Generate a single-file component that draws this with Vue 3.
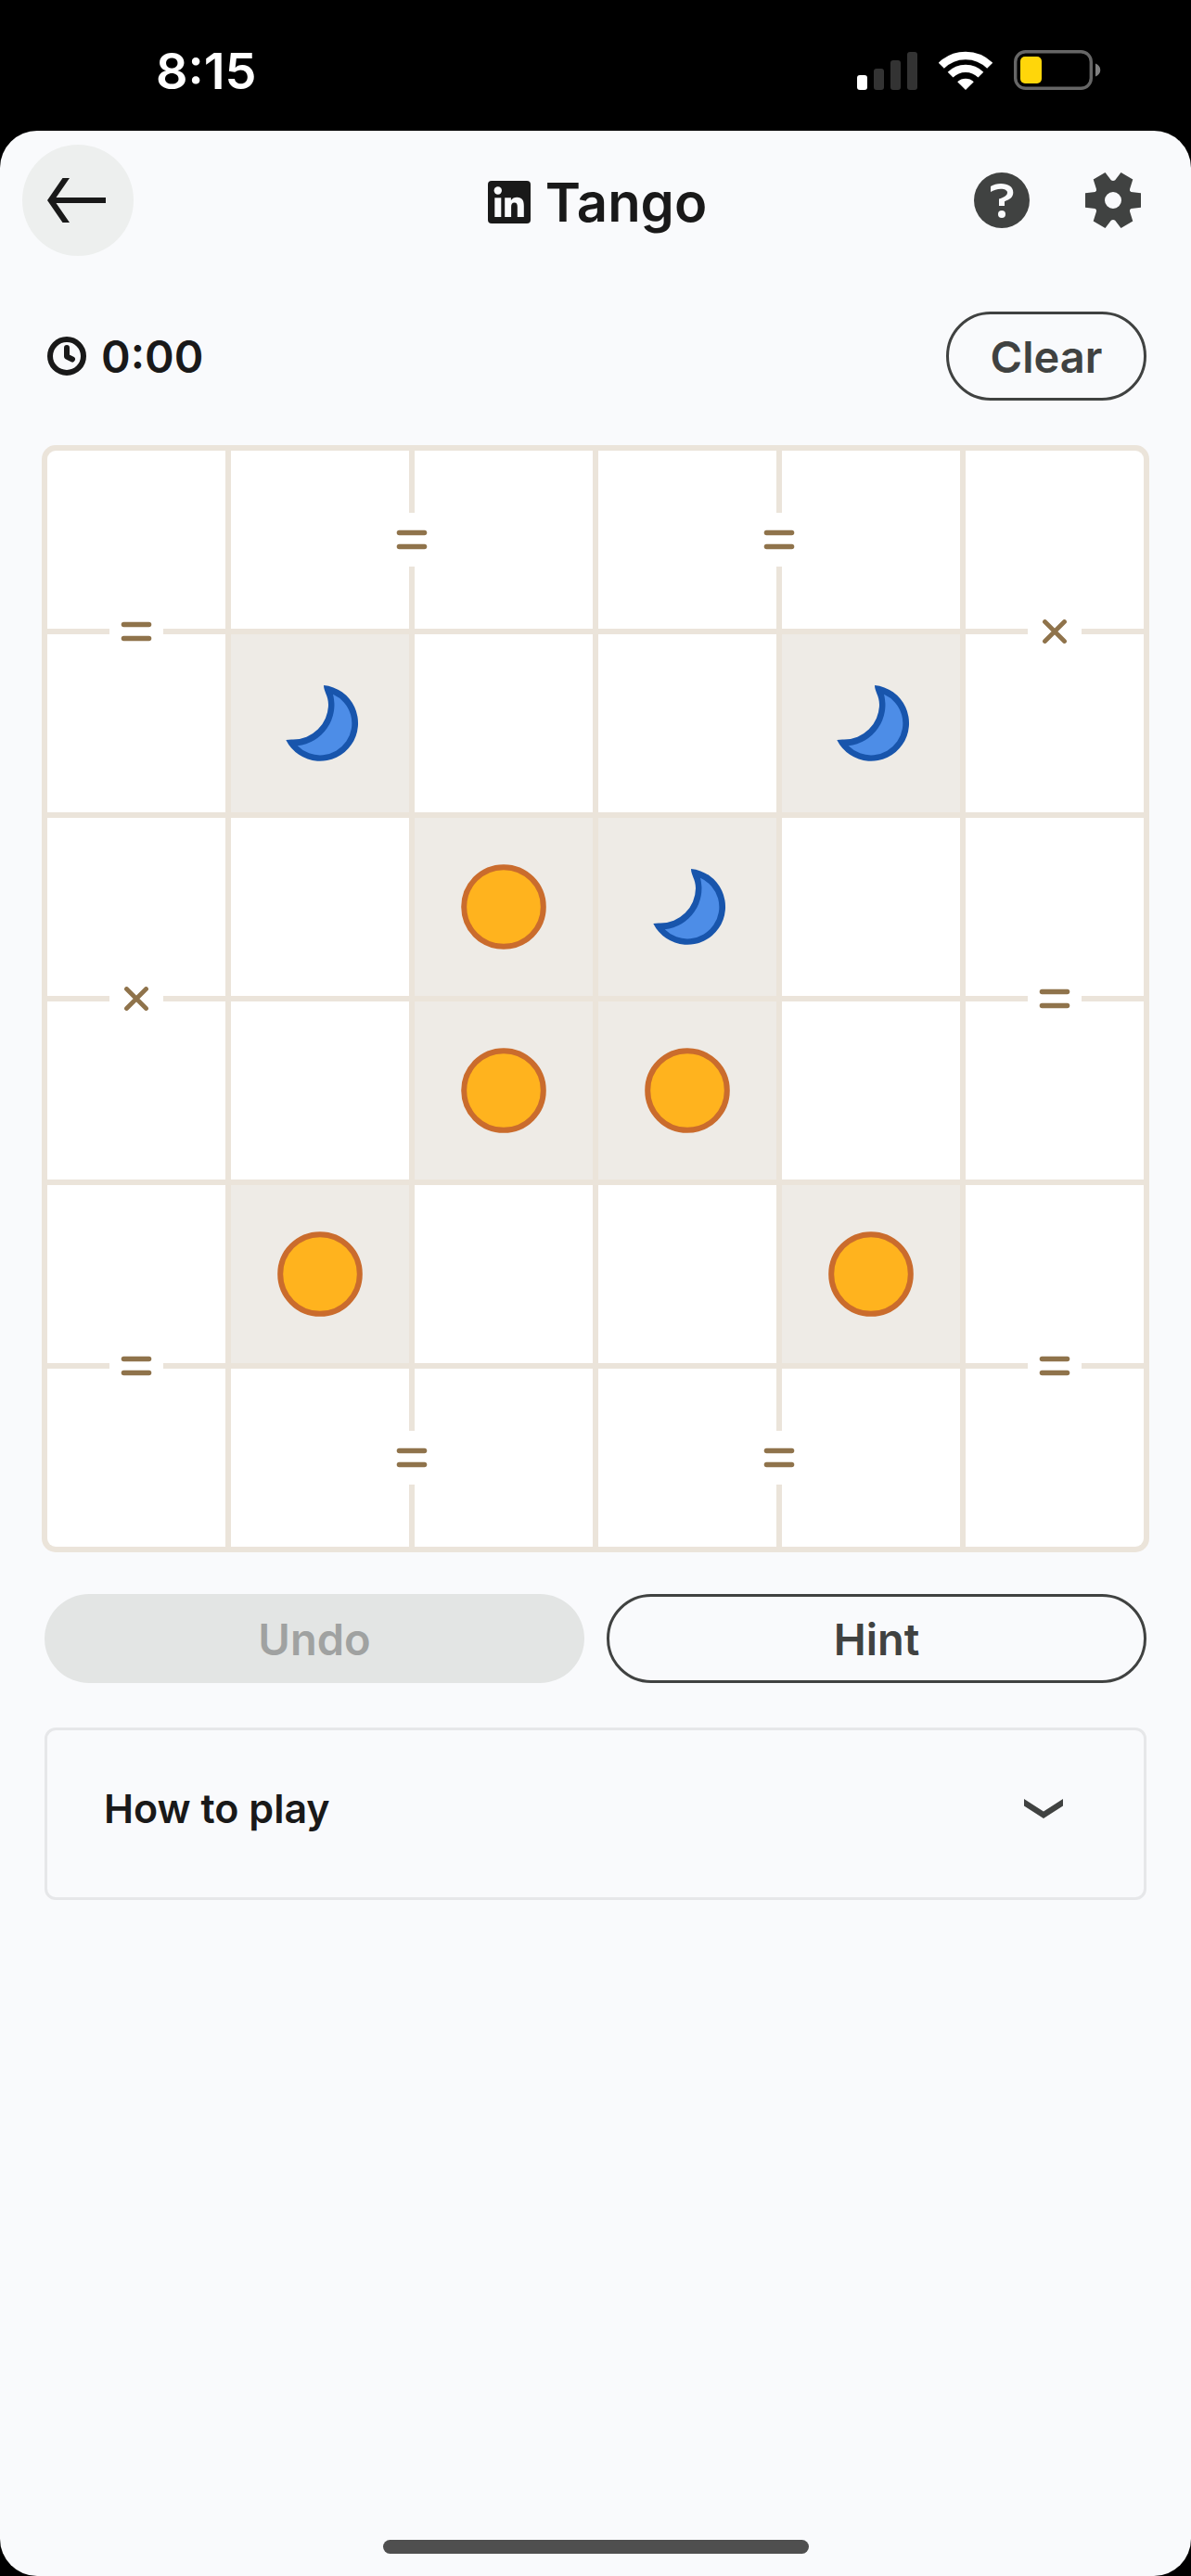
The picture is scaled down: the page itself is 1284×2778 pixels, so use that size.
<script setup>
import { ref } from 'vue'

const size = 6
const pieces = {
  '1-1': 'moon',
  '1-4': 'moon',
  '2-2': 'sun',
  '2-3': 'moon',
  '3-2': 'sun',
  '3-3': 'sun',
  '4-1': 'sun',
  '4-4': 'sun',
}
// Constraint signs, keyed by the cell that owns the shared edge.
const signs = {
  '0-1': { edge: 'right', kind: 'equal' },
  '0-3': { edge: 'right', kind: 'equal' },
  '0-0': { edge: 'bottom', kind: 'equal' },
  '0-5': { edge: 'bottom', kind: 'cross' },
  '2-0': { edge: 'bottom', kind: 'cross' },
  '2-5': { edge: 'bottom', kind: 'equal' },
  '4-0': { edge: 'bottom', kind: 'equal' },
  '4-5': { edge: 'bottom', kind: 'equal' },
  '5-1': { edge: 'right', kind: 'equal' },
  '5-3': { edge: 'right', kind: 'equal' },
}

const cells = Array.from({ length: size * size }, (_, i) => {
  const row = Math.floor(i / size)
  const col = i % size
  const key = `${row}-${col}`
  return {
    key,
    piece: pieces[key],
    sign: signs[key],
    label: `Row ${row + 1}, column ${col + 1}, ${pieces[key] || 'empty'}`,
  }
})

const elapsed = ref('0:00')
</script>

<template>
  <div class="screen">
    <div class="status">
      <span class="clock">8:15</span>
      <div class="indicators">
        <svg width="65" height="42" viewBox="0 0 65 42" aria-hidden="true">
          <rect x="0" y="26" width="11" height="16" rx="3" fill="#fff" />
          <rect x="18" y="19" width="11" height="23" rx="3" fill="#333" />
          <rect x="36" y="10" width="11" height="32" rx="3" fill="#333" />
          <rect x="54" y="1" width="11" height="41" rx="3" fill="#333" />
        </svg>
        <svg width="58" height="42" viewBox="0 0 58 42" aria-hidden="true">
          <path d="M2.8 15.8A37 37 0 0 1 55.2 15.8" fill="none" stroke="#fff" stroke-width="8.6" />
          <path d="M12.6 25.6A23.2 23.2 0 0 1 45.4 25.6" fill="none" stroke="#fff" stroke-width="8.2" />
          <path d="M29 42L20.2 33.2A13 13 0 0 1 37.8 33.2Z" fill="#fff" />
        </svg>
        <svg width="94" height="43" viewBox="0 0 94 43" aria-hidden="true">
          <rect x="1.7" y="1.7" width="81.6" height="39.6" rx="11" fill="none" stroke="#666" stroke-width="3.4" />
          <rect x="7" y="7" width="23" height="29" rx="5" fill="#ffd60a" />
          <path d="M88 14.5C95 17 95 26 88 28.5Z" fill="#808080" />
        </svg>
      </div>
    </div>

    <div class="sheet">
      <header class="bar">
        <button class="icon-btn back" type="button" aria-label="Back">
          <svg width="64" height="48" viewBox="0 0 64 48" aria-hidden="true">
            <path d="M16.5 0H24L9.5 21H63V27H9.5L24 48H16.5L0 24Z" fill="#191919" />
          </svg>
        </button>
        <h1 class="title">
          <svg width="46" height="46" viewBox="0 0 46 46" aria-hidden="true">
            <rect width="46" height="46" rx="4" fill="#191919" />
            <circle cx="10.8" cy="10.5" r="4.2" fill="#f9fafc" />
            <path d="M7.3 18.3H14.3V39H7.3Z" fill="#f9fafc" />
            <path d="M18.2 18.3h6.7v2.8c1.3-2.2 3.7-3.4 6.5-3.4 5.6 0 7.4 3.5 7.4 9V39h-7V28c0-2.6-.6-4.6-3.2-4.6s-3.5 2-3.5 4.6v11h-6.9z" fill="#f9fafc" />
          </svg>
          <span>Tango</span>
        </h1>
        <div class="actions">
          <button class="icon-btn" type="button" aria-label="Help">
            <svg width="60" height="60" viewBox="-30 -30 60 60" aria-hidden="true">
              <circle r="30" fill="#404241" />
              <path d="M-12-15C-9-17-5-18-1-18C7-18 12.3-14.5 12.3-8.5C12.3-3.5 9-1 3 1.2V6H-3V-1.5C2-3.2 6-5.2 6-8.3C6-10.8 3-12.3-1-12.3C-5-12.3-9-11-12-9Z" fill="#f9fafc" />
              <circle cy="15" r="4" fill="#f9fafc" />
            </svg>
          </button>
          <button class="icon-btn" type="button" aria-label="Settings">
            <svg width="60" height="60" viewBox="-30 -30 60 60" aria-hidden="true">
              <path
                fill="#404241"
                fill-rule="evenodd"
                d="M30-7.7V7.7L19.3 9Q17.5 10 18 12L21.3 22.5L8.5 30L2.2 21.7Q0 20.5-2.2 21.7L-8.5 30L-21.3 22.5L-18 12Q-17.5 10-19.3 9L-30 7.7V-7.7L-19.3-9Q-17.5-10-18-12L-21.3-22.5L-8.5-30L-2.2-21.7Q0-20.5 2.2-21.7L8.5-30L21.3-22.5L18-12Q17.5-10 19.3-9ZM9 0A9 9 0 1 0-9 0A9 9 0 1 0 9 0Z"
              />
            </svg>
          </button>
        </div>
      </header>

      <main>
        <div class="toolbar">
          <div class="timer">
            <svg width="42" height="42" viewBox="0 0 42 42" fill="none" stroke="#191919" stroke-width="6" aria-hidden="true">
              <circle cx="21" cy="21" r="18" />
              <path d="M21 12V21.5L27 24.5" stroke-linecap="round" stroke-linejoin="round" />
            </svg>
            <span>{{ elapsed }}</span>
          </div>
          <button class="pill clear" type="button">Clear</button>
        </div>

        <div class="board">
          <button
            v-for="cell in cells"
            :key="cell.key"
            class="cell"
            :class="{ locked: cell.piece }"
            type="button"
            :aria-label="cell.label"
          >
            <svg v-if="cell.piece === 'sun'" class="piece" viewBox="-48 -48 96 96" aria-hidden="true">
              <circle r="42.8" fill="#ffb31e" stroke="#ca6c2d" stroke-width="6" />
            </svg>
            <svg v-else-if="cell.piece === 'moon'" class="piece" viewBox="-48 -48 96 96" aria-hidden="true">
              <path d="M4-41A41 41 0 1 1-36.7 18Q-33 17.3-29 17.5A38 38 0 0 0 9-20C9-30 4-34 4-41Z" fill="#1855ac" />
              <path d="M14-31.2A34.3 34.3 0 1 1-24.3 24.3A44.5 44.5 0 0 0 14-31.2Z" fill="#4d8de7" />
            </svg>
            <span v-if="cell.sign" class="sign" :class="cell.sign.edge">
              <svg v-if="cell.sign.kind === 'equal'" width="34" height="22" viewBox="0 0 34 22" aria-hidden="true">
                <path d="M3.5 3.5H30.5M3.5 18.5H30.5" stroke-width="5.6" />
              </svg>
              <svg v-else width="26" height="26" viewBox="0 0 26 26" aria-hidden="true">
                <path d="M2.5 2.5L23.5 23.5M23.5 2.5L2.5 23.5" stroke-width="4.8" />
              </svg>
            </span>
          </button>
        </div>

        <div class="controls">
          <button class="pill undo" type="button" disabled>Undo</button>
          <button class="pill" type="button">Hint</button>
        </div>

        <button class="howto" type="button" aria-expanded="false">
          <span>How to play</span>
          <svg width="42" height="21" viewBox="0 0 42 21" aria-hidden="true">
            <path d="M0 0L21 13.5L42 0V7.5L21 21L0 7.5Z" fill="#404241" />
          </svg>
        </button>
      </main>

      <div class="home-indicator"></div>
    </div>
  </div>
</template>

<style>
body {
  margin: 0;
  background: #000;
}
</style>

<style scoped>
.screen {
  display: flex;
  flex-direction: column;
  min-height: 100vh;
  font-family: Inter, 'Liberation Sans', sans-serif;
  color: #191919;
  background: #000;
}

button {
  margin: 0;
  padding: 0;
  border: 0;
  font: inherit;
  color: inherit;
  background: none;
}

svg {
  display: block;
  flex: none;
}

.status {
  display: flex;
  align-items: center;
  justify-content: space-between;
  box-sizing: border-box;
  height: 141px;
  padding: 10px 97px 0 168px;
}

.clock {
  padding-top: 2px;
  font-size: 54px;
  font-weight: 600;
  line-height: 64px;
  color: #fff;
}

.indicators {
  display: flex;
  align-items: center;
  gap: 23px;
}

.sheet {
  display: flex;
  flex: 1;
  flex-direction: column;
  background: #f9fafc;
  border-radius: 40px;
}

.bar {
  display: grid;
  grid-template-columns: 1fr auto 1fr;
  align-items: center;
  padding: 15px 24px 0;
}

.icon-btn {
  display: flex;
  align-items: center;
  justify-content: center;
  width: 120px;
  height: 120px;
  border-radius: 50%;
}

.back {
  padding-right: 3px;
  box-sizing: border-box;
  background: #edefee;
}

.title {
  display: flex;
  align-items: center;
  gap: 16px;
  margin: 0;
  padding: 4px 0 0 4px;
  font-size: 58px;
  font-weight: 600;
  line-height: 72px;
}

.actions {
  display: flex;
  justify-content: flex-end;
}

main {
  padding: 60px 48px;
}

.toolbar {
  display: flex;
  align-items: center;
  justify-content: space-between;
}

.timer {
  display: flex;
  align-items: center;
  gap: 16px;
  font-size: 48px;
  font-weight: 600;
  line-height: 60px;
  padding-left: 3px;
}

.timer span {
  padding-top: 2px;
}

.pill {
  flex: 1;
  box-sizing: border-box;
  height: 96px;
  padding-top: 2px;
  border: 3px solid #404241;
  border-radius: 48px;
  font-size: 47px;
  font-weight: 600;
  line-height: 60px;
  color: #404241;
}

.clear {
  flex: none;
  min-width: 216px;
}

.board {
  display: grid;
  grid-template-columns: repeat(6, 1fr);
  gap: 6px;
  margin: 48px -3px 45px;
  padding: 6px;
  background: #ebe4da;
  border-radius: 15px;
}

.cell {
  position: relative;
  display: flex;
  align-items: center;
  justify-content: center;
  aspect-ratio: 1;
  background: #fff;
}

.cell:first-child {
  border-top-left-radius: 9px;
}

.cell:nth-child(6) {
  border-top-right-radius: 9px;
}

.cell:nth-child(31) {
  border-bottom-left-radius: 9px;
}

.cell:last-child {
  border-bottom-right-radius: 9px;
}

.locked {
  background: #eeebe6;
}

.piece {
  width: 50%;
}

.sign {
  position: absolute;
  z-index: 1;
  display: flex;
  align-items: center;
  justify-content: center;
  width: 58px;
  height: 58px;
  background: #fff;
}

.sign path {
  fill: none;
  stroke: #8f734b;
  stroke-linecap: round;
}

.right {
  top: calc(50% - 29px);
  right: -32px;
}

.bottom {
  bottom: -32px;
  left: calc(50% - 29px);
}

.controls {
  display: flex;
  gap: 24px;
}

.undo {
  border-color: transparent;
  background: #e3e5e4;
  color: #a0a2a1;
}

.howto {
  display: flex;
  align-items: center;
  justify-content: space-between;
  box-sizing: border-box;
  width: 100%;
  height: 186px;
  margin-top: 48px;
  padding: 0 87px 12px 61px;
  border: 3px solid #e6e7e9;
  border-radius: 12px;
  font-size: 43px;
  font-weight: 600;
  line-height: 54px;
}

.home-indicator {
  align-self: center;
  width: 36%;
  max-width: 459px;
  height: 15px;
  margin-top: auto;
  margin-bottom: 24px;
  border-radius: 8px;
  background: #4f4f4f;
}
</style>
